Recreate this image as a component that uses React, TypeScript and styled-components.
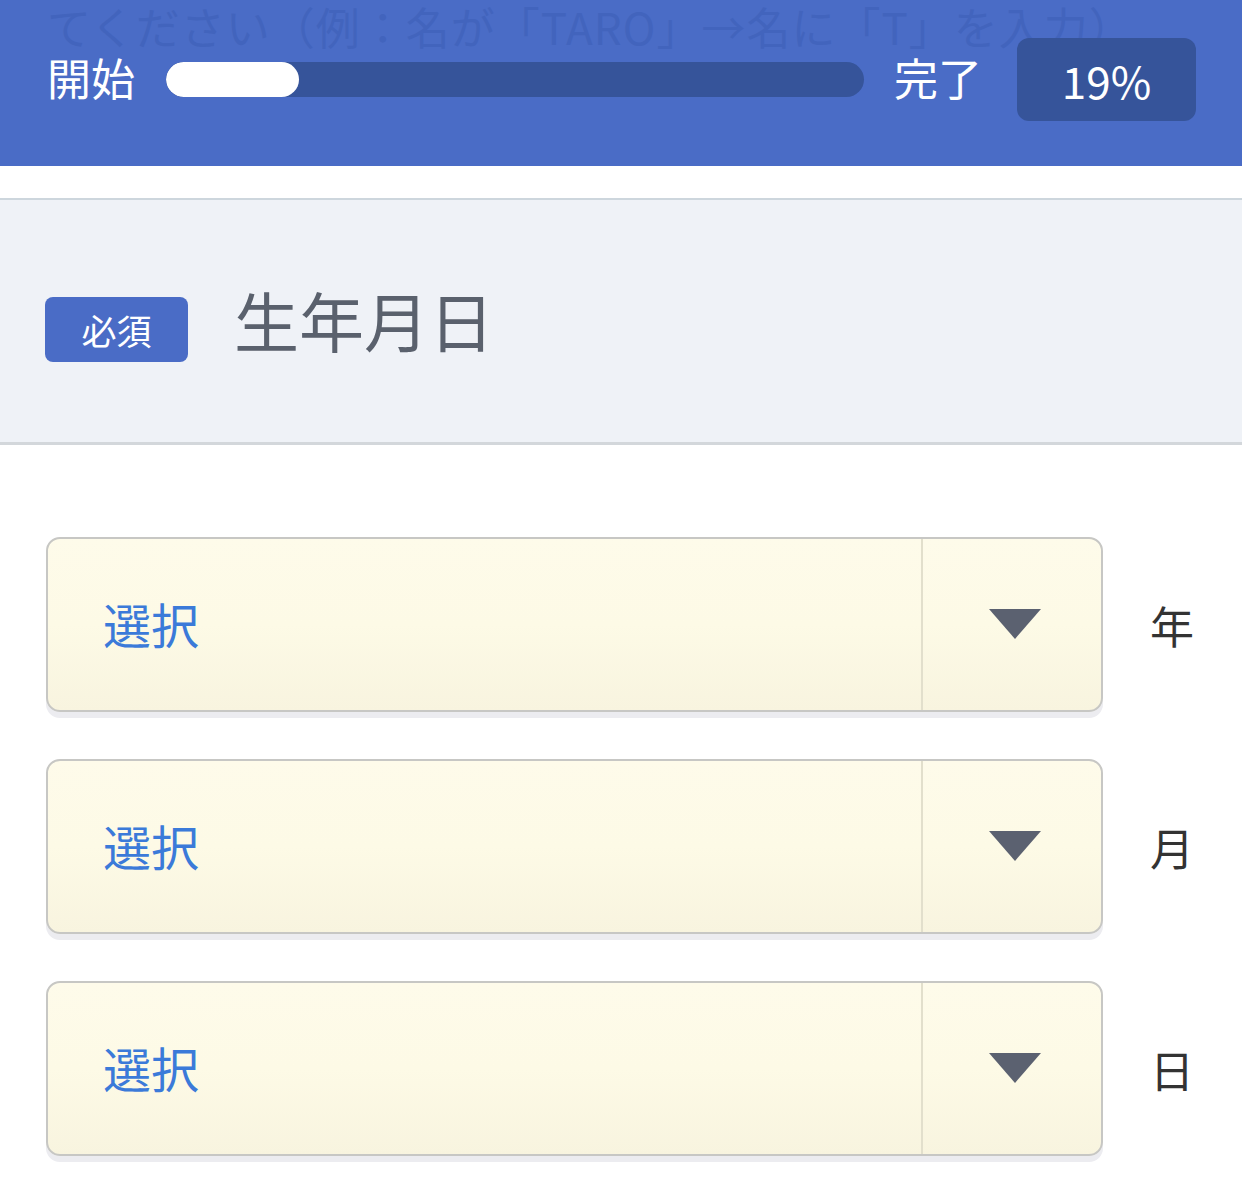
import React from "react";
import styled, { createGlobalStyle } from "styled-components";

const Global = createGlobalStyle`
  html, body { margin: 0; padding: 0; background: #ffffff; }
  body { font-family: "Noto Sans CJK JP", "Noto Sans", sans-serif; }
  * { box-sizing: border-box; }
`;

const Page = styled.div`
  width: 1242px;
  min-height: 1190px;
  background: #ffffff;
  overflow: hidden;
`;

const Header = styled.header`
  background: #4a6cc6;
  height: 166px;
  padding: 0 46px 0 47px;
  overflow: hidden;
`;

const GhostText = styled.div`
  height: 38px;
  padding-top: 6px;
  line-height: 40px;
  font-size: 44px;
  color: #4264bd;
  white-space: nowrap;
  letter-spacing: 1px;
  overflow: visible;
`;

const ProgressRow = styled.div`
  display: flex;
  align-items: center;
  height: 83px;
`;

const EndLabel = styled.span`
  color: #ffffff;
  font-size: 44px;
  line-height: 1;
  white-space: nowrap;
  margin-top: -6px;
`;

const Track = styled.div`
  flex: 1;
  height: 35px;
  margin: 0 30px 0 31px;
  border-radius: 18px;
  background: #36549a;
  overflow: hidden;
`;

const Fill = styled.div`
  height: 100%;
  border-radius: 18px;
  background: #ffffff;
`;

const Percent = styled.div`
  width: 179px;
  height: 83px;
  margin-left: 35px;
  border-radius: 12px;
  background: #36549a;
  color: #ffffff;
  font-size: 44px;
  display: flex;
  align-items: center;
  justify-content: center;
`;

const Spacer = styled.div`
  height: 32px;
`;

const QuestionHead = styled.section`
  height: 247px;
  background: #eff2f7;
  border-top: 2px solid #cdd6dd;
  border-bottom: 3px solid #d3d7db;
  display: flex;
  align-items: center;
  padding: 4px 0 0 45px;
`;

const Required = styled.span`
  width: 143px;
  height: 65px;
  border-radius: 8px;
  background: #4a6cc6;
  color: #ffffff;
  font-size: 35px;
  display: flex;
  align-items: center;
  justify-content: center;
  margin-top: 12px;
`;

const Title = styled.h2`
  margin: 0 0 8px 46px;
  font-size: 65px;
  font-weight: 400;
  color: #5a616d;
  line-height: 1;
`;

const Fields = styled.div`
  display: flex;
  flex-direction: column;
  gap: 47px;
  padding: 92px 46px 0 46px;
`;

const FieldRow = styled.div`
  display: flex;
  align-items: center;
`;

const Select = styled.div`
  flex: 0 0 1057px;
  height: 175px;
  display: flex;
  border: 2px solid #c7c7c4;
  border-radius: 14px;
  background: linear-gradient(180deg, #fefbea 0%, #fdfae6 50%, #f8f4df 100%);
  box-shadow: 0 6px 0 #ececf0;
  overflow: hidden;
`;

const SelectValue = styled.div`
  flex: 1;
  display: flex;
  align-items: center;
  padding: 0 0 4px 55px;
  font-size: 48px;
  color: #3b7ad9;
  border-right: 2px solid #e2dfcc;
`;

const ArrowBox = styled.div`
  width: 178px;
  display: flex;
  align-items: center;
  justify-content: center;
  padding-left: 6px;
  padding-bottom: 2px;
`;

const Unit = styled.span`
  margin-left: 47px;
  font-size: 44px;
  color: #333333;
  line-height: 1;
`;

const Arrow = () => (
  <svg width="52" height="30" viewBox="0 0 52 30">
    <polygon points="0,0 52,0 26,30" fill="#5b6170" />
  </svg>
);

const units = ["年", "月", "日"];

export default function App() {
  const progress = 19;
  return (
    <Page>
      <Global />
      <Header>
        <GhostText>てください（例：名が「TARO」→名に「T」を入力）</GhostText>
        <ProgressRow>
          <EndLabel>開始</EndLabel>
          <Track>
            <Fill style={{ width: `${progress}%` }} />
          </Track>
          <EndLabel>完了</EndLabel>
          <Percent>{progress}%</Percent>
        </ProgressRow>
      </Header>
      <Spacer />
      <QuestionHead>
        <Required>必須</Required>
        <Title>生年月日</Title>
      </QuestionHead>
      <Fields>
        {units.map((u) => (
          <FieldRow key={u}>
            <Select>
              <SelectValue>選択</SelectValue>
              <ArrowBox>
                <Arrow />
              </ArrowBox>
            </Select>
            <Unit>{u}</Unit>
          </FieldRow>
        ))}
      </Fields>
    </Page>
  );
}
